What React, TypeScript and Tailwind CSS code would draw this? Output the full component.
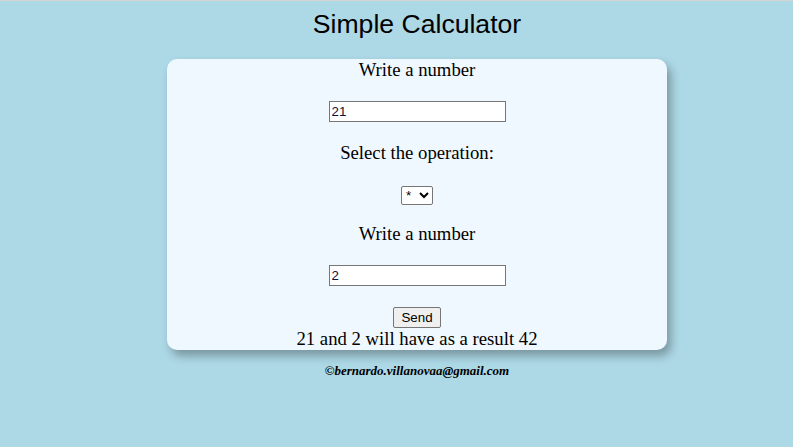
import { useState } from 'react';

const App = () => {
  const [first, setFirst] = useState('21');
  const [op, setOp] = useState('*');
  const [second, setSecond] = useState('2');

  return (
    <div className="min-h-[447px] border-t border-[#d3d3d3] bg-[#add8e6] pl-[41px] font-['Liberation_Serif',serif] text-black">
      <h1 className="pt-[8px] text-center font-['Liberation_Sans',Arial,sans-serif] text-[26.6px] leading-[31px]">
        Simple Calculator
      </h1>
      <div className="mx-auto mt-[19px] flex h-[291px] w-[500px] flex-col items-center rounded-[10px] bg-[#f0f8ff] shadow-[4px_6px_10px_rgba(0,0,0,0.3)]">
        <p className="text-[18.72px] leading-[22px]">Write a number</p>
        <input
          type="text"
          value={first}
          onChange={(e) => setFirst(e.target.value)}
          className="mt-[20px] h-[21px] w-[177px] border border-[#767676] bg-white px-[2px] font-['Liberation_Sans',Arial,sans-serif] text-[13.33px] text-[#111133]"
        />
        <p className="mt-[20px] text-[18.72px] leading-[22px]">Select the operation:</p>
        <select
          value={op}
          onChange={(e) => setOp(e.target.value)}
          className="mt-[22px] h-[20px] w-[32px] appearance-auto rounded-[2px] border border-[#767676] bg-white font-['Liberation_Sans',Arial,sans-serif] text-[13.33px]"
        >
          <option value="+">+</option>
          <option value="-">-</option>
          <option value="*">*</option>
          <option value="/">/</option>
        </select>
        <p className="mt-[18px] text-[18.72px] leading-[22px]">Write a number</p>
        <input
          type="text"
          value={second}
          onChange={(e) => setSecond(e.target.value)}
          className="mt-[20px] h-[21px] w-[177px] border border-[#767676] bg-white px-[2px] font-['Liberation_Sans',Arial,sans-serif] text-[13.33px] text-[#111133]"
        />
        <button className="mt-[21px] h-[21px] w-[48px] rounded-[2px] border border-[#767676] bg-[#efefef] font-['Liberation_Sans',Arial,sans-serif] text-[13.33px]">
          Send
        </button>
        <p className="text-[18.72px] leading-[22px]">21 and 2 will have as a result 42</p>
      </div>
      <p className="mt-[11px] text-center text-[13px] font-bold italic">
        ©bernardo.villanovaa@gmail.com
      </p>
    </div>
  );
};

export default App;
